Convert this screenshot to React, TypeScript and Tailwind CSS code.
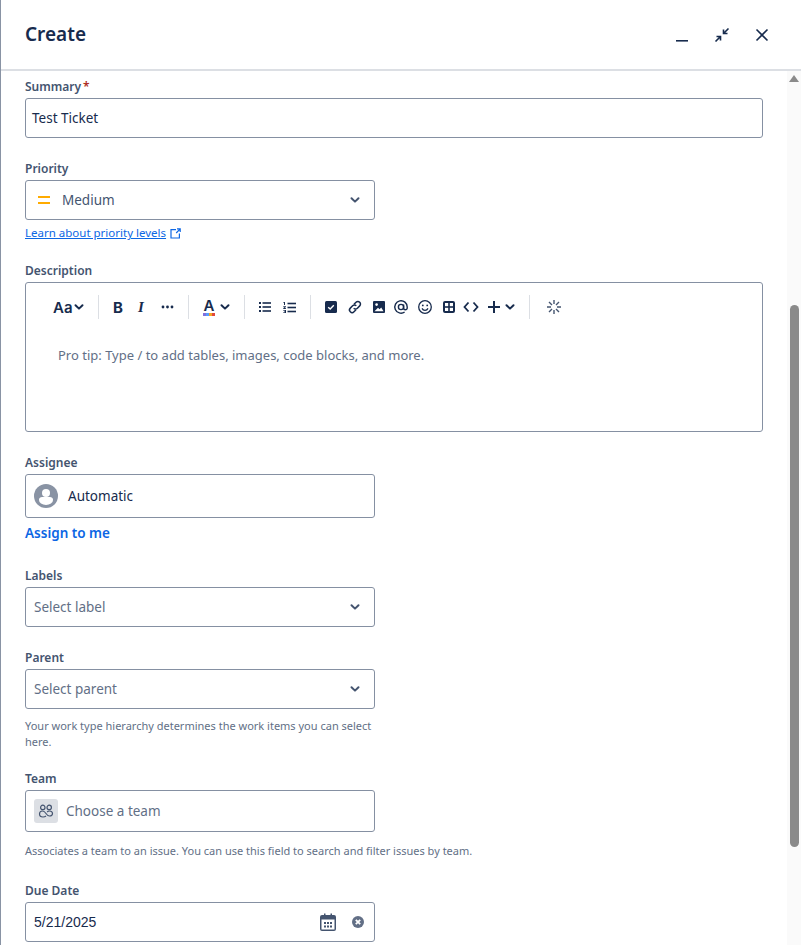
import React from "react";

const Chevron = ({ className = "" }: { className?: string }) => (
  <svg width="10" height="8" viewBox="0 0 10 8" className={className} fill="none" stroke="currentColor" strokeWidth="2" strokeLinecap="round" strokeLinejoin="round">
    <path d="M1.5 2.2 5 5.6l3.5-3.4" />
  </svg>
);

const Label = ({ children, className = "" }: { children: React.ReactNode; className?: string }) => (
  <div className={`text-[12px] leading-[16px] font-semibold text-[#44546f] ${className}`}>{children}</div>
);

const Divider = () => <div className="w-px h-6 bg-[#dcdfe4]" />;

const Select = ({ text }: { text: string }) => (
  <div className="mt-[3px] w-[350px] h-10 border border-[#8590a2] rounded-[3px] flex items-center pl-2 pr-[14px] justify-between">
    <span className="text-[13.5px] text-[#626f86]">{text}</span>
    <Chevron className="text-[#44546f]" />
  </div>
);

export default function App() {
  return (
    <div className="w-[801px] h-[945px] overflow-hidden bg-white border-l border-[#8993a4] font-['Noto_Sans','Open_Sans',sans-serif] text-[#172b4d] flex flex-col">
      <header className="h-[71px] shrink-0 border-b-2 border-[#dcdfe4] flex items-center pl-6 pr-[31px] justify-between">
        <h1 className="text-[19px] font-semibold text-[#172b4d]">Create</h1>
        <div className="flex items-center gap-[24px] text-[#172b4d]">
          <svg width="16" height="16" viewBox="0 0 16 16" fill="none" stroke="currentColor" strokeWidth="1.6"><path d="M2 13.8h12" /></svg>
          <svg width="16" height="16" viewBox="0 0 16 16" fill="none" stroke="currentColor" strokeWidth="1.6"><path d="M14.5 1.5 9.5 6.5M9.5 2.5v4h4M1.5 14.5l5-5M6.5 13.5v-4h-4" /></svg>
          <svg width="16" height="16" viewBox="0 0 16 16" fill="none" stroke="currentColor" strokeWidth="1.6"><path d="m2.5 2.5 11 11M13.5 2.5l-11 11" /></svg>
        </div>
      </header>
      <div className="flex-1 flex min-h-0">
        <main className="flex-1 min-w-0 overflow-hidden pl-6 pr-6">
          <Label className="mt-2">
            Summary<span className="text-[#ae2e24] ml-[2px]">*</span>
          </Label>
          <div className="mt-[3px] h-10 border border-[#8590a2] rounded-[3px] flex items-center px-[6px] text-[13.5px] text-[#172b4d]">Test Ticket</div>

          <Label className="mt-[23px]">Priority</Label>
          <div className="mt-[3px] w-[350px] h-10 border border-[#8590a2] rounded-[3px] flex items-center pl-3 pr-[14px] justify-between">
            <div className="flex items-center gap-[12px]">
              <div className="w-[12px] flex flex-col gap-[4px]">
                <div className="h-[2px] bg-[#ffab00]" />
                <div className="h-[2px] bg-[#ffab00]" />
              </div>
              <span className="text-[13.5px] text-[#44546f]">Medium</span>
            </div>
            <Chevron className="text-[#44546f]" />
          </div>
          <div className="mt-[5px] flex items-center gap-1 h-4 text-[11.5px] text-[#0c66e4]">
            <span className="underline">Learn about priority levels</span>
            <svg width="11" height="11" viewBox="0 0 11 11" fill="none" stroke="currentColor" strokeWidth="1.2"><path d="M6 1.6H1v8.4h8.4V5.5M6.2 5 10 1.2M7 .8h3.2V4" /></svg>
          </div>

          <Label className="mt-[22px]">Description</Label>
          <div className="mt-[3px] h-[150px] border border-[#8590a2] rounded-[3px] text-[#172b4d]">
            <div className="h-[24px] mt-[12px] pl-[27px] flex items-center">
              <span className="text-[15px] font-semibold w-[22px] leading-none font-['Inter',sans-serif]">Aa</span>
              <Chevron className="ml-[-1px]" />
              <div className="ml-[14px] mr-[14px]"><Divider /></div>
              <span className="w-[12px] text-[15px] font-bold leading-none font-['Inter',sans-serif]">B</span>
              <span className="ml-[13px] w-[10px] text-[15px] italic font-semibold leading-none font-['Liberation_Serif',serif]">I</span>
              <svg width="13" height="4" viewBox="0 0 13 4" className="ml-[13px]" fill="currentColor"><circle cx="2" cy="2" r="1.4" /><circle cx="6.5" cy="2" r="1.4" /><circle cx="11" cy="2" r="1.4" /></svg>
              <div className="ml-[14px] mr-[14px]"><Divider /></div>
              <div className="w-[12px] flex flex-col items-center">
                <span className="text-[15px] font-semibold leading-[13px] font-['Inter',sans-serif]">A</span>
                <svg width="12" height="3" viewBox="0 0 12 3" className="mt-[1px]"><rect width="3" height="3" fill="#8270db" /><rect x="3" width="3" height="3" fill="#579dff" /><rect x="6" width="3" height="3" fill="#f5a623" /><rect x="9" width="3" height="3" fill="#e2483d" /></svg>
              </div>
              <Chevron className="ml-[5px]" />
              <div className="ml-[14px] mr-[14px]"><Divider /></div>
              <svg width="12" height="10" viewBox="0 0 12 10" fill="currentColor"><rect y="0" width="2" height="2" /><rect y="4" width="2" height="2" /><rect y="8" width="2" height="2" /><rect x="3.5" y=".2" width="8.5" height="1.6" /><rect x="3.5" y="4.2" width="8.5" height="1.6" /><rect x="3.5" y="8.2" width="8.5" height="1.6" /></svg>
              <svg width="13" height="11" viewBox="0 0 13 11" className="ml-[12px]" fill="currentColor"><rect x="4.5" y=".7" width="8.5" height="1.6" /><rect x="4.5" y="4.7" width="8.5" height="1.6" /><rect x="4.5" y="8.7" width="8.5" height="1.6" /><path d="M.5 0H2v3H1V1H.5zM.3 4.2H3v1H1.6L3 6.4v.6H.3V6h1.3L.3 4.9zM.3 8H3v3H.3v-.8h1.7v-.4H1V9.2h1v-.4H.3z" /></svg>
              <div className="ml-[14px] mr-[14px]"><Divider /></div>
              <svg width="12" height="12" viewBox="0 0 12 12"><rect width="12" height="12" rx="1.5" fill="currentColor" /><path d="m3.2 6.2 2 1.9 3.6-3.8" stroke="#fff" strokeWidth="1.4" fill="none" /></svg>
              <svg width="16" height="16" viewBox="0 0 16 16" className="ml-[10px]" fill="none" stroke="currentColor" strokeWidth="1.5"><path d="M7 5.2 9 3.2a2.6 2.6 0 0 1 3.7 3.7l-2.3 2.3a2.6 2.6 0 0 1-3.7 0" /><path d="M9 10.8 7 12.8a2.6 2.6 0 0 1-3.7-3.7l2.3-2.3a2.6 2.6 0 0 1 3.7 0" /></svg>
              <svg width="12" height="12" viewBox="0 0 12 12" className="ml-[10px]"><rect width="12" height="12" rx="1" fill="currentColor" /><circle cx="3.6" cy="3.6" r="1.3" fill="#fff" /><path d="M1.5 10.3 5 6.8l1.6 1.5 1.6-1.8 2.3 3.8z" fill="#fff" /></svg>
              <svg width="16" height="16" viewBox="0 0 16 16" className="ml-[8px]" fill="none" stroke="currentColor" strokeWidth="1.4"><circle cx="8" cy="8" r="2.6" /><path d="M10.6 5.4V9a1.8 1.8 0 0 0 3.6 0V8a6.2 6.2 0 1 0-2.6 5" /></svg>
              <svg width="16" height="16" viewBox="0 0 16 16" className="ml-[8px]" fill="none" stroke="currentColor" strokeWidth="1.3"><circle cx="8" cy="8" r="6.3" /><circle cx="5.8" cy="6.4" r=".9" fill="currentColor" stroke="none" /><circle cx="10.2" cy="6.4" r=".9" fill="currentColor" stroke="none" /><path d="M5 9.4c.7 1.3 1.7 1.9 3 1.9s2.3-.6 3-1.9" /></svg>
              <svg width="12" height="12" viewBox="0 0 12 12" className="ml-[10px]"><rect width="12" height="12" rx="2" fill="currentColor" /><rect x="2" y="2" width="3.2" height="3.2" fill="#fff" /><rect x="6.8" y="2" width="3.2" height="3.2" fill="#fff" /><rect x="2" y="6.8" width="3.2" height="3.2" fill="#fff" /><rect x="6.8" y="6.8" width="3.2" height="3.2" fill="#fff" /></svg>
              <svg width="16" height="12" viewBox="0 0 16 12" className="ml-[8px]" fill="none" stroke="currentColor" strokeWidth="1.8"><path d="M5.5 1.5 1.5 6l4 4.5M10.5 1.5l4 4.5-4 4.5" /></svg>
              <svg width="12" height="12" viewBox="0 0 12 12" className="ml-[9px]" stroke="currentColor" strokeWidth="2"><path d="M6 0v12M0 6h12" /></svg>
              <Chevron className="ml-[5px]" />
              <div className="ml-[14px] mr-[16px]"><Divider /></div>
              <svg width="16" height="16" viewBox="0 0 16 16" fill="none" stroke="#44546f" strokeWidth="1.4"><path d="M8 1v4M8 11v4M1 8h4M11 8h4M3 3l3 3M10 10l3 3M13 3l-3 3M6 10l-3 3" /></svg>
            </div>
            <div className="mt-[26px] pl-8 text-[13px] leading-[20px] text-[#626f86]">Pro tip: Type / to add tables, images, code blocks, and more.</div>
          </div>

          <Label className="mt-[23px]">Assignee</Label>
          <div className="mt-[3px] w-[350px] h-[44px] border border-[#8590a2] rounded-[3px] flex items-center pl-2 gap-[10px]">
            <svg width="24" height="24" viewBox="0 0 24 24"><circle cx="12" cy="12" r="12" fill="#8993a4" /><circle cx="12" cy="9" r="4" fill="#fff" /><path d="M5 15.5c0-1.500 1.500-2.500 3-2.500h8c1.500 0 3 1 3 2.500V16a7 5 0 0 1-14 0z" fill="#fff" /></svg>
            <span className="text-[13.5px] text-[#172b4d]">Automatic</span>
          </div>
          <div className="mt-[5px] h-[20px] text-[13.5px] leading-[20px] font-semibold text-[#0c66e4]">Assign to me</div>

          <Label className="mt-[25px]">Labels</Label>
          <Select text="Select label" />

          <Label className="mt-[23px]">Parent</Label>
          <Select text="Select parent" />
          <div className="mt-[9px] w-[350px] text-[11px] leading-[16px] text-[#626f86]">Your work type hierarchy determines the work items you can select here.</div>

          <Label className="mt-[21px]">Team</Label>
          <div className="mt-[3px] w-[350px] h-[42px] border border-[#8590a2] rounded-[3px] flex items-center pl-2 gap-2">
            <div className="w-6 h-6 rounded-[3px] bg-[#dcdfe4] flex items-center justify-center">
              <svg width="16" height="16" viewBox="0 0 16 16" fill="none" stroke="#44546f" strokeWidth="1.2"><circle cx="4.8" cy="4.4" r="2.2" /><circle cx="11.2" cy="4.4" r="2.2" /><path d="M1.5 11c0-2 1.400-3 3-3s2.500 1 3.500 2.500 2 2.500 3.500 2.500 3-1 3-2.500-1.300-2.500-3-2.500c-1 0-1.800.4-2.300 1M8 13c-.7.6-1.500 1-3 1-2 0-3.500-1-3.500-3" /></svg>
            </div>
            <span className="text-[13.5px] text-[#626f86]">Choose a team</span>
          </div>
          <div className="mt-[11px] text-[11px] leading-[16px] text-[#626f86] whitespace-nowrap">Associates a team to an issue. You can use this field to search and filter issues by team.</div>

          <Label className="mt-[24px]">Due Date</Label>
          <div className="mt-[3px] w-[350px] h-10 border border-[#8590a2] rounded-[3px] flex items-center pl-2 pr-[10px] justify-between">
            <span className="text-[14px] text-[#172b4d] font-['Liberation_Sans',sans-serif]">5/21/2025</span>
            <div className="flex items-center gap-[15px]">
              <svg width="18" height="18" viewBox="0 0 18 18"><path d="M3 2h2V0.500h1.500V2h5V0.500H13V2h2a2 2 0 0 1 2 2v12a2 2 0 0 1-2 2H3a2 2 0 0 1-2-2V4a2 2 0 0 1 2-2z" fill="#44546f" /><rect x="2.500" y="6.500" width="13" height="10" fill="#fff" /><g fill="#44546f"><rect x="5" y="9" width="2" height="2" /><rect x="8" y="9" width="2" height="2" /><rect x="11" y="9" width="2" height="2" /><rect x="5" y="12.500" width="2" height="2" /><rect x="8" y="12.500" width="2" height="2" /><rect x="11" y="12.500" width="2" height="2" /></g></svg>
              <svg width="12" height="12" viewBox="0 0 12 12"><circle cx="6" cy="6" r="6" fill="#626f86" /><path d="m3.800 3.800 4.400 4.400M8.200 3.800 3.800 8.200" stroke="#fff" strokeWidth="1.800" /></svg>
            </div>
          </div>
        </main>
        <aside className="w-[14px] shrink-0 bg-[#fafafa] flex flex-col items-center">
          <svg width="10" height="7" viewBox="0 0 10 7" className="mt-[4px]"><path d="M5 0 10 7H0z" fill="#8a8a8a" /></svg>
          <div className="mt-[223px] w-[9px] h-[542px] rounded-[5px] bg-[#8a8a8a]" />
        </aside>
      </div>
    </div>
  );
}
